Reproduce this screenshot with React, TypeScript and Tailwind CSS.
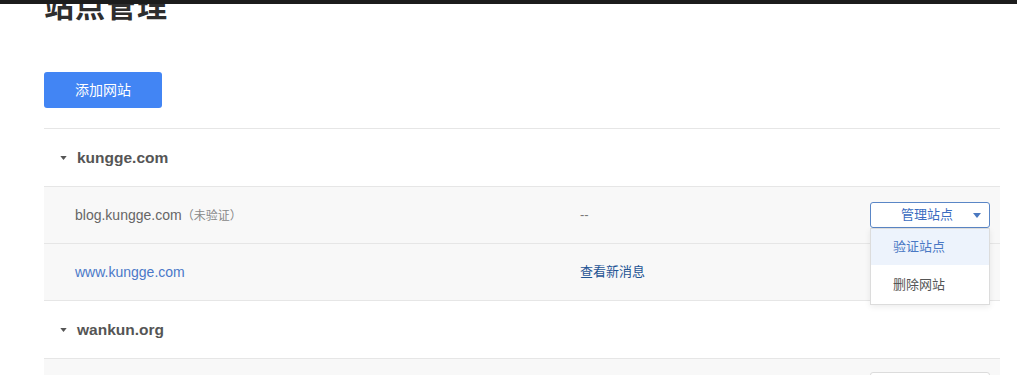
import React from "react";

const font = "font-['Liberation_Sans','Noto_Sans_CJK_SC',sans-serif]";

function Caret({ className }: { className: string }) {
  return (
    <svg viewBox="0 0 8 5" className={className} fill="currentColor">
      <path d="M0 0h8L4 5z" />
    </svg>
  );
}

function ManageButton({ open }: { open?: boolean }) {
  return (
    <div className="relative w-[120px]">
      <button className="flex h-[26px] w-full items-center rounded-[3px] border border-[#5a86c6] bg-white pl-[30px] pr-[8px] text-[13px] text-[#3b6cc0]">
        <span className="flex-1 text-left">管理站点</span>
        <Caret className="h-[5px] w-[8px] text-[#4a78c0]" />
      </button>
      {open ? (
        <div className="absolute left-0 top-full z-10 w-[120px] border border-[#dcdcdc] bg-white shadow-[0_2px_6px_rgba(0,0,0,0.08)]">
          <div className="flex h-[36px] items-center bg-[#edf3fc] pl-[22px] text-[13px] text-[#4a78c4]">验证站点</div>
          <div className="flex h-[39px] items-center pl-[22px] text-[13px] text-[#555]">删除网站</div>
        </div>
      ) : null}
    </div>
  );
}

function GroupHeader({ name }: { name: string }) {
  return (
    <div className="flex h-[58px] items-center border-b border-[#e6e6e6] bg-white pl-[16px]">
      <Caret className="h-[4px] w-[7px] text-[#555]" />
      <span className="ml-[10px] text-[15.5px] font-bold text-[#555]">{name}</span>
    </div>
  );
}

export default function App() {
  return (
    <div className={`relative h-[375px] overflow-hidden bg-white ${font}`}>
      <div className="absolute inset-x-0 top-0 z-20 h-[4px] bg-[#1c1c1c]" />

      <div className="ml-[44px] w-[956px]">
        <h1 className="-mt-[11px] text-[30px] font-bold leading-[36px] tracking-[1px] text-[#2e2e2e]">站点管理</h1>

        <button className="mt-[47px] flex h-[36px] w-[118px] items-center justify-center rounded-[3px] bg-[#4285f4] text-[14px] text-white">
          添加网站
        </button>

        <div className="mt-[20px] border-t border-[#e6e6e6]">
          <GroupHeader name="kungge.com" />

          <div className="flex h-[57px] items-center border-b border-[#e6e6e6] bg-[#f8f8f8] pl-[31px] pr-[10px]">
            <div className="w-[505px] text-[14px] text-[#666]">
              blog.kungge.com<span className="text-[12px] text-[#888]">（未验证）</span>
            </div>
            <div className="flex-1 text-[13px] text-[#777]">--</div>
            <div className="relative z-10">
              <ManageButton open />
            </div>
          </div>

          <div className="flex h-[57px] items-center border-b border-[#e6e6e6] bg-[#f8f8f8] pl-[31px] pr-[10px]">
            <div className="w-[505px] text-[14px] text-[#4a78c8]">www.kungge.com</div>
            <div className="flex-1 text-[13px] text-[#1f5494]">查看新消息</div>
          </div>

          <GroupHeader name="wankun.org" />

          <div className="flex h-[57px] items-start border-b border-[#e6e6e6] bg-[#f8f8f8] pl-[31px] pr-[10px] pt-[13px]">
            <div className="w-[505px] text-[14px] text-[#666]">&nbsp;</div>
            <div className="flex-1" />
            <div className="h-[26px] w-[120px] rounded-[3px] border border-[#dcdcdc] bg-white" />
          </div>
        </div>
      </div>
    </div>
  );
}
